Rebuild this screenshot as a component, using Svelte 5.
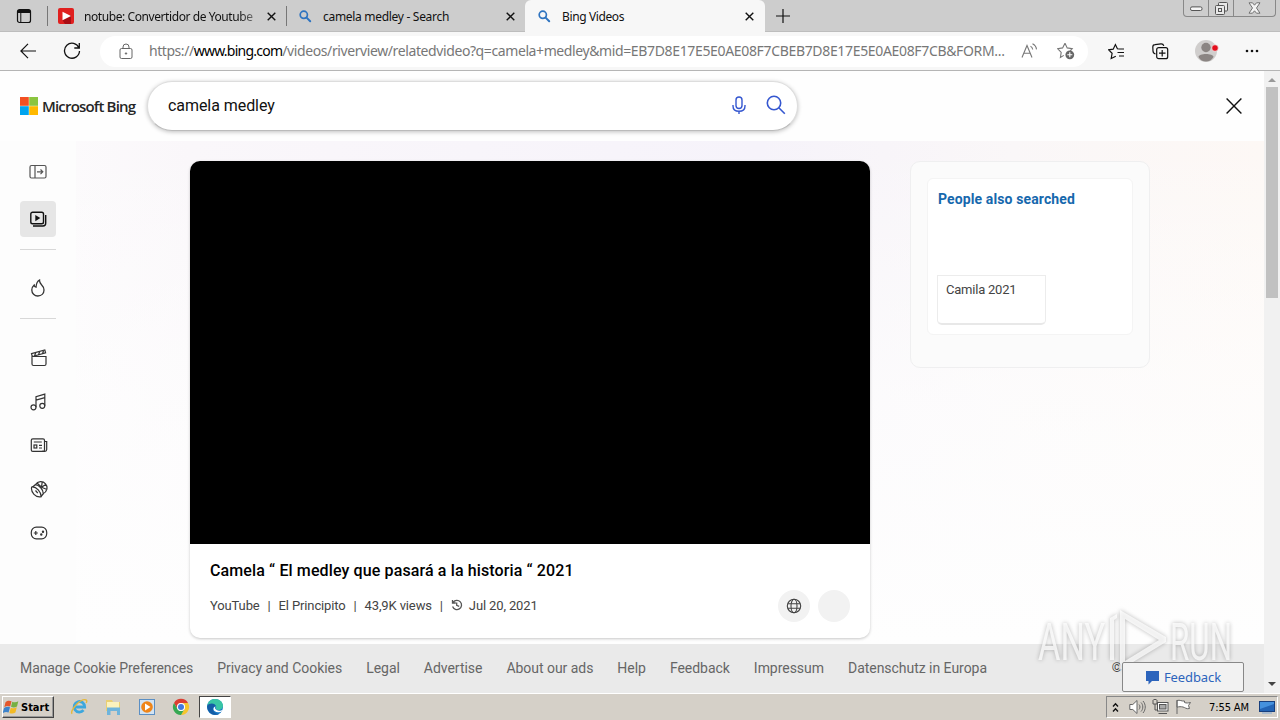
<script>
	const tabs = [
		{ title: 'notube: Convertidor de Youtube', icon: 'notube', spacing: -0.42 },
		{ title: 'camela medley - Search', icon: 'search', spacing: -0.3 },
		{ title: 'Bing Videos', icon: 'search', active: true, spacing: -0.38 }
	];

	const categories = ['movies', 'music', 'news', 'sports', 'games'];

	const footerLinks = [
		'Manage Cookie Preferences',
		'Privacy and Cookies',
		'Legal',
		'Advertise',
		'About our ads',
		'Help',
		'Feedback',
		'Impressum',
		'Datenschutz in Europa'
	];

	let query = 'camela medley';
</script>

<div class="screen">
	<!-- browser tabs -->
	<div class="tabbar">
		<div class="tab-actions">
			<svg width="16" height="16" viewBox="0 0 16 16" fill="none" stroke="#111">
				<rect x="1.5" y="1.5" width="13" height="13" rx="2" stroke-width="1.2" />
				<path d="M2 3.5h12" stroke-width="3" />
				<path d="M4.8 4v10" />
			</svg>
		</div>
		{#each tabs as tab}
			<div class="tab" class:active={tab.active}>
				{#if tab.icon === 'notube'}
					<svg width="16" height="16" viewBox="0 0 16 16">
						<rect width="16" height="16" rx="2" fill="#e0201f" />
						<path d="M13 7v9H7l-2.500-3.800z" fill="#a90d14" />
						<path d="M4.5 3.8 13 8l-8.500 4.200z" fill="#fff" />
					</svg>
				{:else}
					<svg width="16" height="16" viewBox="0 0 16 16" fill="none" stroke="#2f74c0">
						<circle cx="6.800" cy="6.800" r="3.600" stroke-width="1.700" />
						<path d="m9.600 9.600 3.600 3.600" stroke-width="2" stroke-linecap="round" />
					</svg>
				{/if}
				<span class="tab-title" class:faded={tab.icon === 'notube'} style="letter-spacing: {tab.spacing}px">{tab.title}</span>
				<svg class="tab-close" width="9" height="9" viewBox="0 0 9 9" stroke="#111" stroke-width="1.400">
					<path d="m.7.7 7.600 7.600M8.300.7.7 8.300" />
				</svg>
			</div>
		{/each}
		<svg class="new-tab" width="14" height="14" viewBox="0 0 14 14" stroke="#111" stroke-width="1.200">
			<path d="M7 0v14M0 7h14" />
		</svg>
		<div class="window-buttons">
			<span class="min">
				<svg width="13" height="6" viewBox="0 0 13 6"><rect x=".5" y=".9" width="11.500" height="3.600" rx="1.500" fill="#f5f5f5" stroke="#555" /></svg>
			</span>
			<span class="max">
				<svg width="13" height="13" viewBox="0 0 13 13" fill="#e8e8e8" stroke="#555">
					<rect x="3.500" y=".5" width="9" height="8.500" rx="1" />
					<rect x=".5" y="3.500" width="9" height="9" rx="1" />
					<rect x="3.500" y="6.500" width="3" height="3" />
				</svg>
			</span>
			<span class="cls">
				<svg width="13" height="12" viewBox="0 0 13 12" fill="#f3f3f3" stroke="#666" stroke-width=".9">
					<path d="M1 .8h3.500l2 2.400 2-2.400H12L8.500 6l3.500 5.200H8.500l-2-2.400-2 2.400H1L4.500 6z" />
				</svg>
			</span>
		</div>
	</div>

	<!-- address bar -->
	<div class="toolbar">
		<svg class="back" width="18" height="16" viewBox="0 0 18 16" fill="none" stroke="#111" stroke-width="1.200">
			<path d="M8 .8.9 8 8 15.200M1 8h15" />
		</svg>
		<svg class="reload" width="18" height="18" viewBox="0 0 18 18" fill="none" stroke="#111" stroke-width="1.300">
			<path d="M16 6A7.500 7.500 0 1 0 16.500 9M16.300 1v5h-5" />
		</svg>
		<div class="address">
			<svg width="14" height="17" viewBox="0 0 14 17" fill="none" stroke="#666">
				<rect x="1" y="5.500" width="12" height="10" rx="1.500" />
				<path d="M4 5.500V4a3 3 0 0 1 6 0v1.500" />
				<circle cx="7" cy="10.500" r=".7" fill="#666" />
			</svg>
			<div class="url">
				<span class="scheme">https://</span><b>www.bing.com</b><span class="path">/videos/riverview/relatedvideo?q=camela+medley&amp;mid=</span><span class="ids">EB7D8E17E5E0AE08F7CBEB7D8E17E5E0AE08F7CB&amp;FORM...</span>
			</div>
			<svg class="read" width="17" height="16" viewBox="0 0 17 16" fill="none" stroke="#777" stroke-width="1.100">
				<path d="m1 14.500 5-12 5 12M2.800 10.300h6.500M9.500 3.200c1.300.6 2 1.700 2.200 3.300M11.500.8c2.400 1.200 3.700 3 4 5.600" />
			</svg>
			<svg class="star" width="18" height="18" viewBox="0 0 18 18" fill="none" stroke="#777" stroke-width="1.100">
				<path d="m8 1.300 2.200 4.600 5 .7-2 2.200M6.800 13.400l-3.400 2 .8-5-3.600-3.700 5-.8L8 1.300" />
				<circle cx="12.800" cy="12.800" r="4.400" fill="#666" stroke="none" />
				<path d="M10.300 12.800h5M12.800 10.300v5" stroke="#fff" />
			</svg>
		</div>
		<svg class="favs" width="18" height="17" viewBox="0 0 18 17" fill="none" stroke="#111" stroke-width="1.200">
			<path d="m11 6-1.600-.2-2-4.200-2.200 4.600-4.600.6 3.500 3.500-.9 5.200 4.600-2.300M11 6h5M9.500 9.500H16M11 13h5" />
		</svg>
		<svg class="collections" width="17" height="17" viewBox="0 0 17 17" fill="none" stroke="#111" stroke-width="1.200">
			<path d="M3.500 11C1.800 10.500 1 9.500 1 8L.8 4C.8 2.600 1.700 1.700 3 1.600l6-.8c1.400-.1 2.400.5 2.800 2" />
			<rect x="4.700" y="4.700" width="11" height="11" rx="2" />
			<path d="M10.200 7v6.500M7 10.200h6.500" />
		</svg>
		<svg class="avatar" width="24" height="24" viewBox="0 0 24 24">
			<circle cx="11" cy="12" r="11" fill="#d0cecd" />
			<circle cx="11" cy="8.500" r="4.700" fill="#8b8583" />
			<path d="M3.500 18c0-4 15-4 15 0-1.800 3-4.300 4.600-7.500 4.600S5 21 3.500 18z" fill="#8b8583" />
			<circle cx="20" cy="9" r="3.300" fill="#e30f1c" stroke="#f2f2f2" stroke-width=".7" />
		</svg>
		<svg class="dots" width="14" height="4" viewBox="0 0 14 4" fill="#111">
			<circle cx="2" cy="2" r="1.300" /><circle cx="7" cy="2" r="1.300" /><circle cx="12" cy="2" r="1.300" />
		</svg>
	</div>

	<div class="viewport">
		<div class="page">
			<header>
				<div class="logo">
					<svg width="18" height="18" viewBox="0 0 18 18">
						<path fill="#f25022" d="M0 0h8.800v8.800H0z" />
						<path fill="#8bc53f" d="M9.200 0H18v8.800H9.200z" />
						<path fill="#00a4ef" d="M0 9.200h8.800V18H0z" />
						<path fill="#ffb900" d="M9.200 9.200H18V18H9.200z" />
					</svg>
					<span>Microsoft Bing</span>
				</div>
				<div class="searchbox">
					<span class="query">{query}</span>
					<svg width="14" height="19" viewBox="0 0 14 19" fill="none" stroke="#3557d0" stroke-width="1.400">
						<rect x="4" y="1" width="6" height="11.500" rx="3" />
						<path d="M1 9v1c0 3.500 2.500 5.300 6 5.300s6-1.800 6-5.300V9M7 15.300V18" />
					</svg>
					<svg width="20" height="20" viewBox="0 0 20 20" fill="none" stroke="#3557d0" stroke-width="1.600">
						<circle cx="8" cy="8" r="6.700" />
						<path d="m12.800 12.800 6 6" />
					</svg>
				</div>
				<svg class="close-page" width="16" height="16" viewBox="0 0 16 16" stroke="#111" stroke-width="1.400">
					<path d="m.6.6 14.800 14.800M15.400.6.6 15.400" />
				</svg>
			</header>

			<main>
				<nav>
					<div class="nav-item">
						<svg width="18" height="16" viewBox="0 0 18 16" fill="none" stroke="#555" stroke-width="1.200">
							<rect x="1" y="1.500" width="16" height="12.500" rx="1.500" />
							<path d="M6 1.500V14M8 7.800h5.500M11.500 5.500l2.300 2.300-2.300 2.300" />
						</svg>
					</div>
					<div class="nav-item selected">
						<svg width="18" height="16" viewBox="0 0 18 16" fill="none" stroke="#111" stroke-width="1.400">
							<rect x="1.800" y="1.300" width="12.700" height="11.500" rx="1.800" />
							<path d="M4 15h10c1.800 0 2.700-1 2.700-2.700V4" />
							<path d="M6.300 3.900v6.400l5-3.200z" fill="#111" stroke="none" />
						</svg>
					</div>
					<hr />
					<div class="nav-item trending">
						<svg width="16" height="18" viewBox="0 0 16 18" fill="none" stroke="#333" stroke-width="1.300">
							<path d="M9.500 1C6.800 2.300 6.300 4.700 6 8.200 4.800 8 4.300 7 4.200 6 2.500 7.500 1.800 9.300 1.800 11c0 3.500 2.700 6 6 6 3.500 0 6.200-2.400 6.200-6 0-2.300-1-3.700-2.500-5.200C10.200 4.500 9.400 3.200 9.500 1z" />
						</svg>
					</div>
					<hr />
					<div class="categories">
						{#each categories as name}
							<div class="category">
								<svg width="18" height="18" viewBox="0 0 18 18" fill="none" stroke="#333" stroke-width="1.200">
									{#if name === 'movies'}
										<path d="M2 7.500h14V15a1.500 1.500 0 0 1-1.500 1.500h-11A1.500 1.500 0 0 1 2 15zM1.500 4.600 14.800 1l.8 2.900L2.300 7.500zM4.500 7l1.300-3.500M8.500 5.800l1.200-3.300M12.500 4.800l1-3" />
									{:else if name === 'music'}
										<circle cx="3.500" cy="14.300" r="2.500" />
										<circle cx="12.300" cy="12.800" r="2.500" />
										<path d="M6 14.300V3.700l8.800-2.600v11.700M6 7.200l8.800-2.600" />
									{:else if name === 'news'}
										<rect x="1.300" y="2.800" width="13.200" height="12.600" rx="1.500" />
										<path d="M14.500 5.500h2.200v8.100c0 1-.8 1.800-1.800 1.800H12M3.800 6h8M9 9.300h3M9 12h3" />
										<rect x="4" y="9" width="2.800" height="3" />
									{:else if name === 'sports'}
										<path d="M5.500 4.600a6.200 6.200 0 1 1 7.600 9M11.500 7.200l-4.200-4M11.500 7.200l4.600-3M11.500 7.200l.8-5.800M11.500 7.200l5.500 2.300" />
										<path d="M1.700 7c4.800-.5 9.500 5 9.500 9.700C5.900 18 .4 12.300 1.700 7zM2.600 7l2.700-2.300c4 .3 8 4.800 8 9L11 16.500M5.500 10.500l2.300 2.700" />
									{:else}
										<rect x="1.300" y="3.200" width="15.400" height="11.600" rx="5" />
										<path d="M5.800 7v4M3.800 9h4" />
										<circle cx="11.300" cy="10.500" r=".6" fill="#333" />
										<circle cx="13" cy="7.800" r=".6" fill="#333" />
									{/if}
								</svg>
							</div>
						{/each}
					</div>
				</nav>

				<article>
					<div class="player"></div>
					<h1>Camela “ El medley que pasará a la historia “ 2021</h1>
					<div class="details">
						<div class="meta">
							<span>YouTube</span><i>|</i><span>El Principito</span><i>|</i><span>43,9K views</span><i>|</i>
							<svg width="12" height="12" viewBox="0 0 12 12" fill="none" stroke="#555" stroke-width="1.300">
								<path d="M2.200 3.300A4.600 4.600 0 1 1 1.600 7.500M1.500 1v3h3.300M5.700 3.600v2.800l2.500 1" />
							</svg>
							<span>Jul 20, 2021</span>
						</div>
						<div class="round">
							<svg width="16" height="16" viewBox="0 0 16 16" fill="none" stroke="#444" stroke-width="1.100">
								<circle cx="8" cy="8" r="6.700" />
								<ellipse cx="8" cy="8" rx="3" ry="6.700" />
								<path d="M2 5.700h12M2 10.300h12" />
							</svg>
						</div>
						<div class="round"></div>
					</div>
				</article>

				<aside>
					<div class="related">
						<h2>People also searched</h2>
						<div class="suggestion">
							<div class="thumb"></div>
							<div class="caption">Camila 2021</div>
						</div>
					</div>
				</aside>
			</main>

			<footer>
				{#each footerLinks as link}
					<span>{link}</span>
				{/each}
				<span class="copyright">©</span>
			</footer>
		</div>

		<div class="scrollbar">
			<svg width="16" height="16" viewBox="0 0 16 16"><path d="m4 11 4-4 4 4z" fill="#999" /></svg>
			<div class="thumb-bar"></div>
			<svg width="16" height="16" viewBox="0 0 16 16"><path d="m4 5 4 4 4-4z" fill="#444" /></svg>
		</div>
	</div>

	<svg class="watermark" width="204" height="72" viewBox="0 0 204 72">
		<g fill="#fff" fill-opacity=".75">
			<text x="2" y="52" textLength="67" lengthAdjust="spacingAndGlyphs">ANY</text>
			<text x="134" y="52" textLength="62" lengthAdjust="spacingAndGlyphs">RUN</text>
		</g>
		<path
			d="M84 2 130 29v5L84 62zM89 11v42l34-21zM74 10l7-4v4l-3 2v40h-4z"
			fill="#fff"
			fill-opacity=".75"
			fill-rule="evenodd"
		/>
	</svg>

	<button class="feedback">
		<svg width="15" height="15" viewBox="0 0 15 15"><path d="M1 1h13v10H7l-3.500 3.500V11H1z" fill="#2c64bc" /></svg>
		Feedback
	</button>

	<!-- windows taskbar -->
	<div class="taskbar">
		<div class="start">
			<svg width="17" height="16" viewBox="0 0 17 16">
				<path d="M2.500 3.200C4.500 1.500 6.500 1.500 8.500 2.300L7.200 7.500C5.200 6.600 3.300 6.800 1.300 8.200z" fill="#e4572c" />
				<path d="M9.300 2.700c2 .9 4 .8 6-.5L14 7.500c-2 1.300-4 1.300-6 .3z" fill="#76b043" />
				<path d="M1.100 9c2-1.500 4-1.500 5.900-.8l-1.400 5.300c-2-.9-4-.7-6 .7z" fill="#3d83cb" />
				<path d="M7.800 8.700c2 1 4 .8 6-.5l-1.400 5.300c-2 1.300-4 1.300-6 .4z" fill="#f3ba24" />
			</svg>
			<span>Start</span>
		</div>
		<div class="quick">
			<svg width="18" height="18" viewBox="0 0 18 18" fill="none">
				<path d="M13.500 12.200A5.300 5.300 0 1 1 14.700 9H5" stroke="#3da7dd" stroke-width="2.800" />
				<path d="M2.200 15.800C-1 13 11-.5 16.200 2c.9.600.6 1.900 0 3" stroke="#e5b83c" stroke-width="1.400" />
			</svg>
			<svg width="18" height="18" viewBox="0 0 18 18">
				<path d="M2 2h6l1 2h7v9H2z" fill="#e9cf73" />
				<path d="M3 4h12v6H3z" fill="#fbf2bd" />
				<path d="M3 9.500h13V17h-3v-4H6.500v4H3z" fill="#6eb4dc" />
			</svg>
			<svg width="18" height="18" viewBox="0 0 18 18">
				<rect x="1.500" y="1.500" width="15" height="15" fill="#d2e3f3" stroke="#5b8fc4" />
				<circle cx="9" cy="9" r="5.800" fill="#ef8519" />
				<path d="M7 5.500v7L12.500 9z" fill="#fff" />
			</svg>
			<svg width="18" height="18" viewBox="0 0 18 18">
				<path d="M2 5A8 8 0 0 1 16 5H9a4 4 0 0 0-3.500 6z" fill="#dc3e32" />
				<path d="M16 5a8 8 0 0 1-7 12l3.500-6A4 4 0 0 0 9 5z" fill="#f6c52d" />
				<path d="M2 5l3.500 6a4 4 0 0 0 7 0L9 17A8 8 0 0 1 2 5z" fill="#36a853" />
				<circle cx="9" cy="9" r="4" fill="#fff" />
				<circle cx="9" cy="9" r="3" fill="#4279df" />
			</svg>
		</div>
		<div class="running">
			<svg width="18" height="18" viewBox="0 0 18 18">
				<circle cx="9" cy="9" r="8" fill="#1677c6" />
				<path d="M1.200 8C2 3.500 5 1 9 1c4.600 0 8 3.200 8 6.800 0 2.600-2 4.200-4.500 4.200-1.800 0-3-.6-2.500-1.700C11.500 7 5.500 4.500 1.200 8z" fill="#39c5a5" />
				<path d="M1.200 8C3 4.500 9.800 5 9.800 8.500 7.500 8 6.500 10 7 12c.6 2 2.800 4.300 6 4C8 18.600 1 15 1.200 8z" fill="#145ca5" />
				<path d="M9.600 8.600c-1.600 2 .8 4.100 3.400 4.100 1.600 0 2.900-.5 4-1.300l-1 1.800c-1.200.9-2.500 1.200-4 1-2.500-.3-4.300-1.300-4.500-2.800-.2-1.400.8-2.600 2.100-2.800z" fill="#fff" />
			</svg>
		</div>
		<div class="tray">
			<svg width="7" height="11" viewBox="0 0 7 11" fill="none" stroke="#111" stroke-width="1.400">
				<path d="m1 4.500 2.500-2.700L6 4.500M1 9.500l2.500-2.700L6 9.500" />
			</svg>
			<svg class="speaker" width="17" height="16" viewBox="0 0 17 16" fill="none" stroke="#666">
				<path d="M.8 5.500h3L8 1.500v13l-4.200-4h-3z" fill="#fff" />
				<path d="M10 5.500c1.300 1.500 1.300 3.500 0 5M12 3.500c2.400 2.500 2.400 6.500 0 9M14 2c3 3.500 3 8.500 0 12" />
			</svg>
			<svg class="network" width="17" height="16" viewBox="0 0 17 16" fill="none" stroke="#555">
				<rect x="5.500" y="3.500" width="10.500" height="8.500" fill="#fff" />
				<rect x="7.500" y="5.500" width="6.500" height="4.500" fill="#aaa" />
				<path d="M6.500 14.500H15M1 1v4h4V1M3 5v6h3M1.500.5h3" />
			</svg>
			<svg class="flag" width="17" height="16" viewBox="0 0 17 16" fill="#fff" stroke="#666">
				<path d="M2 1v14M2 1.500c3-1 4.500 1 7.500.5v1.500c2 .8 3.500.5 6 0l-2 3 1 3c-3 .8-4.500-1-6.500-1.500-2-.4-4-.5-6 .2z" />
			</svg>
			<span class="clock">7:55 AM</span>
			<svg width="16" height="14" viewBox="0 0 16 14">
				<rect x=".5" y="1.500" width="15" height="10" fill="#2364b5" stroke="#183f7d" />
				<path d="M1 2h14v2L1 9z" fill="#4591dd" />
				<path d="M3 13h10" stroke="#82a8d4" />
			</svg>
		</div>
	</div>
</div>

<style>
	:global(body) {
		margin: 0;
		overflow: hidden;
	}
	svg {
		display: block;
		flex: none;
	}
	.screen {
		position: relative;
		display: flex;
		flex-direction: column;
		width: 1280px;
		height: 720px;
		overflow: hidden;
		font-family: Roboto, sans-serif;
		background: #fff;
	}

	/* tabs */
	.tabbar {
		display: flex;
		align-items: center;
		height: 32px;
		background: #cdcdcd;
		box-shadow: inset 0 -1px #bdbdbd;
		font: 12px 'Noto Sans', sans-serif;
		color: #111;
	}
	.tab-actions {
		width: 31px;
		padding-left: 16px;
	}
	.tab {
		box-sizing: border-box;
		display: flex;
		align-items: center;
		width: 239px;
		height: 32px;
		padding: 0 10px 0 11px;
		background: linear-gradient(#777, #777) left center / 1px 20px no-repeat;
	}
	.tab.active {
		width: 240px;
		padding-right: 11px;
		border-radius: 6px 6px 0 0;
		background: #f7f7f7;
	}
	.tab-title {
		width: 172px;
		margin-left: 10px;
		white-space: nowrap;
	}
	.faded {
		mask-image: linear-gradient(to right, #000 90%, rgba(0, 0, 0, 0.4));
	}
	.tab-close {
		margin-left: auto;
	}
	.new-tab {
		margin-left: 11px;
	}
	.window-buttons {
		box-sizing: border-box;
		display: flex;
		align-self: flex-start;
		height: 17px;
		margin-left: auto;
		margin-right: 4px;
		border: 1px solid #888;
		border-top: 0;
		border-radius: 0 0 4px 4px;
	}
	.window-buttons span {
		display: flex;
		align-items: center;
		justify-content: center;
		width: 24px;
	}
	.window-buttons .min {
		align-items: flex-end;
		padding-bottom: 2px;
		height: 12px;
	}
	.window-buttons .max {
		border: solid #888;
		border-width: 0 1px;
	}
	.window-buttons .cls {
		width: 41px;
	}

	/* toolbar */
	.toolbar {
		box-sizing: border-box;
		display: flex;
		align-items: center;
		height: 39px;
		padding-left: 20px;
		background: #f7f7f7;
		border-bottom: 1px solid #b5b5b5;
	}
	.reload {
		margin-left: 25px;
	}
	.address {
		box-sizing: border-box;
		display: flex;
		align-items: center;
		width: 988px;
		height: 31px;
		margin-left: 19px;
		padding-left: 19px;
		border-radius: 16px;
		background: #fff;
	}
	.url {
		width: 858px;
		margin-left: 16px;
		padding-bottom: 1px;
		font: 14px 'Noto Sans', sans-serif;
		color: #777;
		white-space: nowrap;
	}
	.scheme {
		letter-spacing: -0.45px;
	}
	.url b {
		font-weight: 400;
		letter-spacing: -0.76px;
		color: #000;
	}
	.path {
		letter-spacing: -0.4px;
	}
	.ids {
		letter-spacing: -0.34px;
	}
	.read {
		margin-left: 14px;
	}
	.star {
		margin-left: 19px;
	}
	.favs {
		margin-left: 20px;
	}
	.collections {
		margin-left: 26px;
	}
	.avatar {
		margin-left: 26px;
	}
	.dots {
		margin-left: 26px;
	}

	/* page */
	.viewport {
		display: flex;
		height: 622px;
	}
	.page {
		display: flex;
		flex-direction: column;
		width: 1264px;
		background: #fefefe;
	}
	header {
		display: flex;
		align-items: center;
		height: 70px;
		padding-left: 20px;
	}
	.logo {
		display: flex;
		align-items: center;
		width: 127px;
		font: 600 15px 'Open Sans', sans-serif;
		color: #262626;
		white-space: nowrap;
	}
	.logo span {
		margin-left: 4px;
		padding-bottom: 1px;
		letter-spacing: -0.82px;
	}
	.searchbox {
		box-sizing: border-box;
		display: flex;
		align-items: center;
		width: 651px;
		height: 50px;
		padding: 0 11px 2px 20px;
		border-radius: 25px;
		border: 1px solid #ddd;
		border-bottom-color: #bbb;
		background: #fff;
		box-shadow: 0 1px 4px rgba(0, 0, 0, 0.25);
	}
	.query {
		flex: 1;
		font-size: 16px;
		letter-spacing: -0.06px;
		color: #111;
	}
	.searchbox svg + svg {
		margin-left: 20px;
	}
	.close-page {
		margin-left: 428px;
	}
	main {
		display: flex;
		align-items: flex-start;
		height: 503px;
		overflow: hidden;
		background:
			linear-gradient(to bottom, rgba(254, 254, 254, 0) 0, rgba(254, 254, 254, 0.65) 50%, #fefefe 100%),
			linear-gradient(to right, #fdfcfd 0, #faf7fa 15%, #f6f3fa 60%, #faf7f8 80%, #fdf8f5 100%);
	}
	nav {
		box-sizing: border-box;
		width: 76px;
		height: 503px;
		padding: 13px 20px 0;
		background: #fdfdfd;
	}
	.nav-item {
		display: flex;
		align-items: center;
		justify-content: center;
		width: 36px;
		height: 36px;
		border-radius: 4px;
	}
	.selected {
		margin-top: 11px;
		background: #e6e6e6;
	}
	hr {
		width: 36px;
		margin: 12px 0 0;
		border: 0;
		border-top: 1px solid #d8d8d8;
	}
	.trending {
		margin-top: 20px;
	}
	.categories {
		display: flex;
		flex-direction: column;
		margin-top: 17px;
	}
	.category {
		display: flex;
		align-items: center;
		justify-content: center;
		width: 38px;
		height: 43.8px;
	}
	article {
		width: 680px;
		height: 477px;
		margin: 20px 0 0 114px;
		border-radius: 10px;
		background: #fff;
		box-shadow: 0 1px 3px rgba(0, 0, 0, 0.22);
	}
	.player {
		height: 383px;
		border-radius: 10px 10px 0 0;
		background: #000;
	}
	h1 {
		margin: 17px 0 0 20px;
		font-size: 16px;
		font-weight: 500;
		letter-spacing: 0.12px;
		line-height: 20px;
		color: #000;
		white-space: nowrap;
	}
	.details {
		display: flex;
		align-items: center;
		height: 32px;
		margin: 9px 20px 0;
	}
	.meta {
		display: flex;
		flex: 1;
		align-items: center;
		padding-bottom: 2px;
		font-size: 13px;
		letter-spacing: -0.13px;
		color: #444;
	}
	.meta i {
		width: 3px;
		margin: 0 8px;
		font-style: normal;
	}
	.meta svg {
		margin-right: 6px;
	}
	.round {
		display: flex;
		align-items: center;
		justify-content: center;
		width: 32px;
		height: 32px;
		margin-left: 8px;
		border-radius: 50%;
		background: #f2f2f2;
	}
	aside {
		box-sizing: border-box;
		width: 240px;
		height: 207px;
		margin: 20px 0 0 40px;
		padding: 16px;
		border: 1px solid #efeff0;
		border-radius: 10px;
		background: #fbfbfb;
	}
	.related {
		box-sizing: border-box;
		height: 157px;
		padding: 10px;
		border: 1px solid #f4f4f4;
		border-radius: 6px;
		background: #fff;
	}
	h2 {
		margin: 0;
		font-size: 14px;
		font-weight: 700;
		letter-spacing: 0.12px;
		line-height: 20px;
		color: #1668ad;
		white-space: nowrap;
	}
	.suggestion {
		width: 109px;
		margin-left: -1px;
	}
	.thumb {
		height: 66px;
	}
	.caption {
		box-sizing: border-box;
		height: 50px;
		padding: 6px 8px;
		border: 1px solid #ececec;
		border-bottom: 2px solid #e8e8e8;
		border-radius: 0 0 5px 5px;
		font-size: 13px;
		letter-spacing: -0.22px;
		color: #444;
	}
	footer {
		box-sizing: border-box;
		display: flex;
		align-items: center;
		gap: 24px;
		height: 49px;
		padding: 0 0 2px 20px;
		background: #eaeaea;
		font-size: 14px;
		letter-spacing: -0.035px;
		color: #666;
		white-space: nowrap;
	}
	footer span:first-child {
		letter-spacing: -0.08px;
	}
	footer .copyright {
		margin-left: auto;
		margin-right: 142px;
		font-size: 13px;
		color: #444;
	}
	.scrollbar {
		width: 16px;
		background: #f1f1f1;
		display: flex;
		flex-direction: column;
	}
	.thumb-bar {
		width: 12px;
		height: 211px;
		margin: 0 2px auto;
		background: #c1c1c1;
	}

	.watermark {
		position: absolute;
		left: 1036px;
		top: 608px;
		font: 400 51px Roboto, sans-serif;
		filter: drop-shadow(0 0 2px rgba(0, 0, 0, 0.35));
		pointer-events: none;
	}
	.feedback {
		position: absolute;
		left: 1122px;
		top: 662px;
		display: flex;
		align-items: center;
		justify-content: center;
		gap: 4px;
		width: 122px;
		height: 30px;
		padding: 0;
		border: 1px solid #888;
		border-radius: 2px;
		background: #f2f2f2;
		font: 13px 'Noto Sans', sans-serif;
		letter-spacing: -0.1px;
		color: #2c64bc;
	}

	/* taskbar */
	.taskbar {
		box-sizing: border-box;
		display: flex;
		align-items: center;
		height: 27px;
		padding-left: 2px;
		border-top: 1px solid #fff;
		background: #d5d0c8;
		font-family: 'DejaVu Sans Condensed', 'DejaVu Sans', sans-serif;
	}
	.start {
		box-sizing: border-box;
		display: flex;
		align-items: center;
		gap: 1px;
		width: 52px;
		height: 22px;
		border: 1px solid;
		border-color: #fff #444 #444 #fff;
		box-shadow: inset -1px -1px #999;
		font-size: 11px;
		font-weight: 700;
	}
	.quick {
		display: flex;
		gap: 16px;
		margin-left: 16px;
	}
	.running {
		box-sizing: border-box;
		display: flex;
		align-items: center;
		justify-content: center;
		width: 32px;
		height: 22px;
		margin-left: 9px;
		border: 1px solid;
		border-color: #444 #fff #fff #444;
		background: #fff;
	}
	.tray {
		box-sizing: border-box;
		display: flex;
		align-items: center;
		width: 172px;
		height: 22px;
		margin-left: auto;
		margin-right: 2px;
		padding-left: 5px;
		border: 1px solid;
		border-color: #888 #fff #fff #888;
	}
	.speaker {
		margin-left: 10px;
	}
	.network,
	.flag {
		margin-left: 6px;
	}
	.clock {
		width: 42px;
		margin: 0 8px 0 17px;
		font-size: 11px;
		letter-spacing: -0.1px;
		white-space: nowrap;
	}
</style>
